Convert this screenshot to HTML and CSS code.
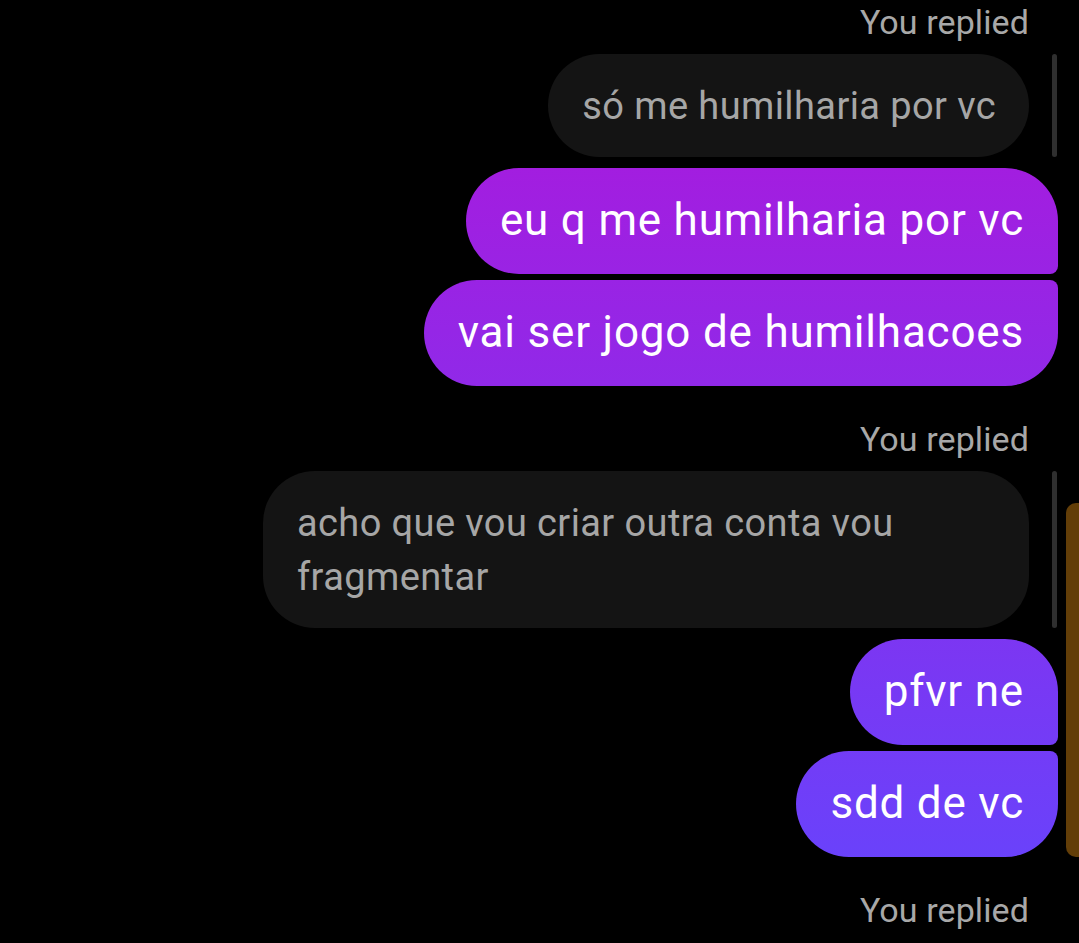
FILE: index.html
```html
<!DOCTYPE html>
<html lang="pt">
<head>
    <meta charset="UTF-8">
    <meta name="viewport" content="width=device-width, initial-scale=1.0">
    <title>Conversa</title>
    <link rel="stylesheet" href="styles.css">
</head>
<body>
    <div class="thread">
        <div class="reply-label">You replied</div>
        <div class="quote-row">
            <div class="quote">só me humilharia por vc</div>
            <div class="quote-bar"></div>
        </div>
        <div class="msg first">eu q me humilharia por vc</div>
        <div class="msg last">vai ser jogo de humilhacoes</div>

        <div class="reply-label">You replied</div>
        <div class="quote-row">
            <div class="quote">acho que vou criar outra conta vou fragmentar</div>
            <div class="quote-bar"></div>
        </div>
        <div class="msg first">pfvr ne</div>
        <div class="msg last">sdd de vc</div>

        <div class="reply-label">You replied</div>
    </div>
    <div class="scroll-thumb"></div>
</body>
</html>
```
FILE: styles.css
```css
html, body {
    background-color: #000;
}
body {
    margin: 0;
    font-family: Roboto, "Liberation Sans", sans-serif;
    overflow: hidden;
    height: 943px;
    position: relative;
}
.thread {
    display: flex;
    flex-direction: column;
    align-items: flex-end;
    padding: 0 21px 0 0;
}
.reply-label {
    color: #a8a8a8;
    font-size: 34px;
    letter-spacing: 0.1px;
    line-height: 44px;
    margin-right: 29px;
    margin-bottom: 10px;
}
.msg + .reply-label {
    margin-top: 31px;
}
.quote-row {
    display: flex;
    gap: 23px;
    margin-bottom: 11px;
}
.quote {
    max-width: 766px;
    box-sizing: border-box;
    background-color: #141414;
    color: #a6a6a6;
    font-size: 38px;
    letter-spacing: 0.4px;
    line-height: 54px;
    padding: 24.5px 33px 24.5px 34px;
    border-radius: 52px;
}
.quote-bar {
    width: 5px;
    border-radius: 3px;
    background-color: #2f2f2f;
    margin-right: 1px;
}
.msg {
    color: #fff;
    font-size: 44px;
    letter-spacing: 0.8px;
    line-height: 53px;
    padding: 26px 34px 27px 34px;
    border-radius: 53px;
    background: linear-gradient(180deg, #b015d9 0px, #6346fe 943px) fixed;
}
.msg.first {
    border-bottom-right-radius: 8px;
    margin-bottom: 6px;
}
.msg.last {
    border-top-right-radius: 8px;
}
.scroll-thumb {
    position: absolute;
    right: 0;
    top: 503px;
    width: 13px;
    height: 354px;
    background-color: #633e08;
    border-radius: 10px 0 0 10px;
}
```
